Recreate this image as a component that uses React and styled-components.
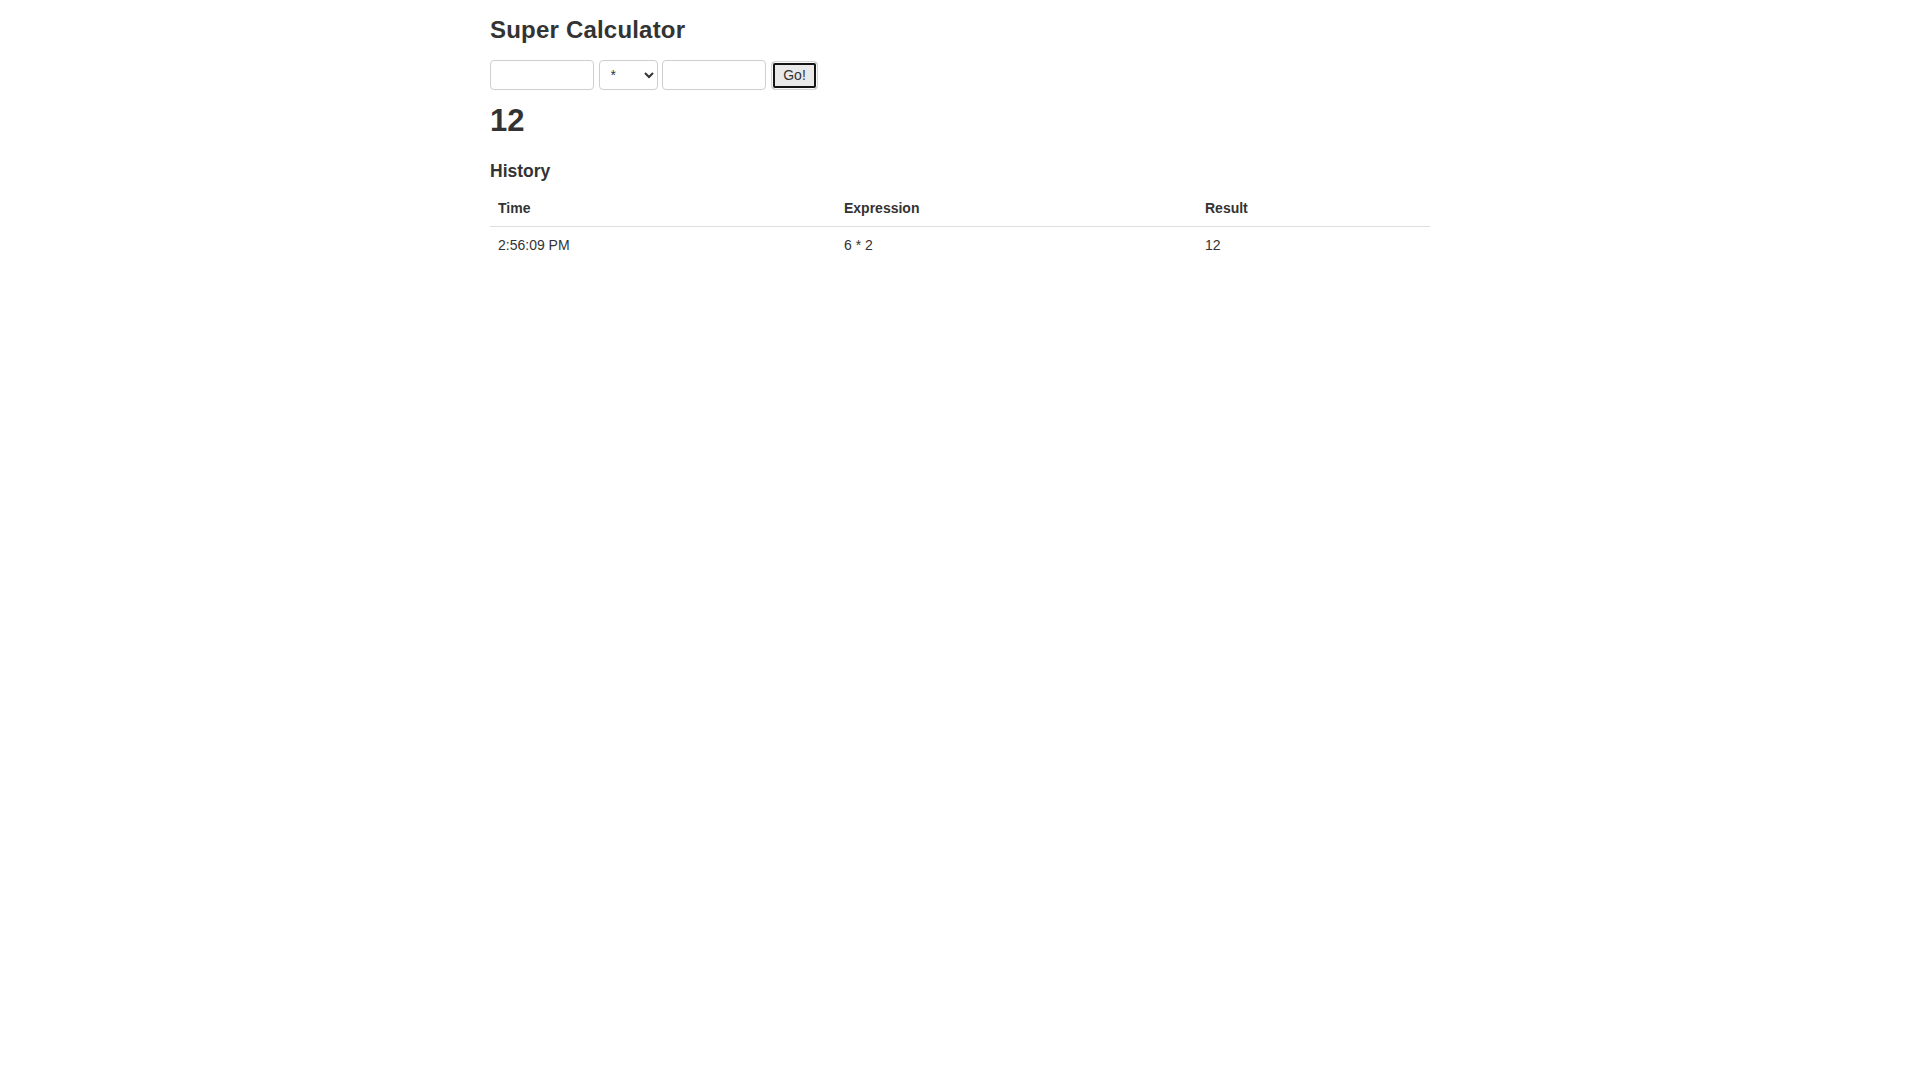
import React from "react";
import styled, { createGlobalStyle } from "styled-components";

const Global = createGlobalStyle`
  html, body { margin: 0; padding: 0; background: #fff; }
  body {
    font-family: "Liberation Sans", Arial, Helvetica, sans-serif;
    font-size: 14px;
    line-height: 1.42857;
    color: #333;
  }
`;

const Container = styled.div`
  width: 940px;
  margin: 0 auto;
`;

const Title = styled.h3`
  margin: 17px 0 0;
  font-size: 24px;
  line-height: 26px;
  letter-spacing: 0.2px;
  font-weight: 700;
  color: #333;
`;

const Form = styled.form`
  display: flex;
  align-items: center;
  gap: 4.5px;
  margin-top: 17px;
  height: 30px;
`;

const NumberInput = styled.input`
  box-sizing: border-box;
  width: 104px;
  height: 30px;
  margin: 0;
  padding: 2px 6px;
  border: 1px solid #cfcfcf;
  border-radius: 4px;
  font-family: "Liberation Sans", Arial, sans-serif;
  font-size: 14px;
  color: #333;
  background: #fff;
  outline: none;
`;

const OpSelect = styled.select`
  box-sizing: border-box;
  width: 59px;
  height: 30px;
  margin: 0;
  padding: 0 4px 0 7px;
  border: 1px solid #cfcfcf;
  border-radius: 4px;
  font-family: "Liberation Sans", Arial, sans-serif;
  font-size: 14px;
  color: #333;
  background: #fff;
  outline: none;
`;

const GoButton = styled.button`
  box-sizing: border-box;
  width: 47px;
  height: 29px;
  margin: 0 0 0 0.5px;
  padding: 0;
  border: 1px solid #d4d4d4;
  border-radius: 4px;
  background: #e9e9e9;
  box-shadow: inset 0 0 0 1px #fafafa, inset 0 0 0 3px #141414;
  font-family: "Liberation Sans", Arial, sans-serif;
  font-size: 14px;
  color: #333;
  cursor: pointer;
`;

const Result = styled.h2`
  margin: 14px 0 0;
  font-size: 31px;
  line-height: 33px;
  font-weight: 700;
  color: #333;
`;

const Subtitle = styled.h4`
  margin: 24px 0 0;
  font-size: 17.5px;
  line-height: 20px;
  font-weight: 700;
  color: #333;
`;

const Table = styled.table`
  width: 100%;
  margin-top: 9px;
  table-layout: fixed;
  border-collapse: collapse;
  border-spacing: 0;
`;

const Th = styled.th`
  box-sizing: border-box;
  width: ${(p) => p.$w || "auto"};
  padding: 8px;
  line-height: 20px;
  text-align: left;
  font-weight: 700;
  vertical-align: bottom;
  border-bottom: 1px solid #dedede;
`;

const Td = styled.td`
  padding: 8px;
  line-height: 20px;
  vertical-align: top;
`;

const history = [{ time: "2:56:09 PM", expr: "6 * 2", result: "12" }];

export default function App() {
  return (
    <>
      <Global />
      <Container>
        <Title>Super Calculator</Title>
        <Form onSubmit={(e) => e.preventDefault()}>
          <NumberInput type="text" />
          <OpSelect defaultValue="*">
            <option value="+">+</option>
            <option value="-">-</option>
            <option value="*">*</option>
            <option value="/">/</option>
            <option value="%">%</option>
          </OpSelect>
          <NumberInput type="text" />
          <GoButton type="submit">Go!</GoButton>
        </Form>
        <Result>12</Result>
        <Subtitle>History</Subtitle>
        <Table>
          <thead>
            <tr>
              <Th $w="346px">Time</Th>
              <Th $w="361px">Expression</Th>
              <Th>Result</Th>
            </tr>
          </thead>
          <tbody>
            {history.map((h, i) => (
              <tr key={i}>
                <Td>{h.time}</Td>
                <Td>{h.expr}</Td>
                <Td>{h.result}</Td>
              </tr>
            ))}
          </tbody>
        </Table>
      </Container>
    </>
  );
}
